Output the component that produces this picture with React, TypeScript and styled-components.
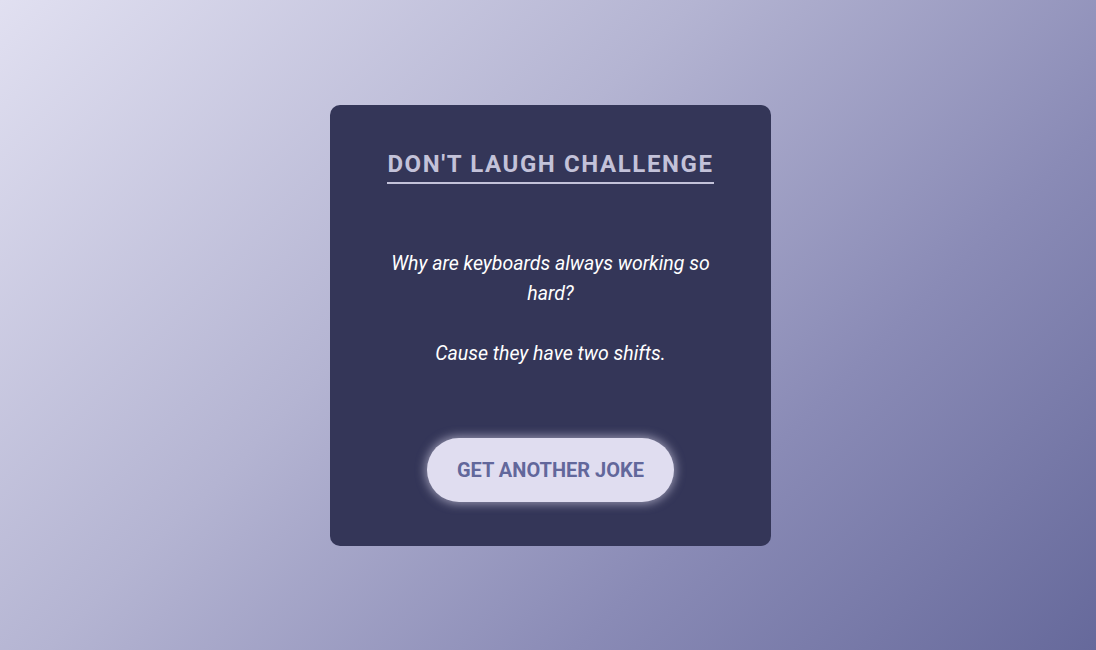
import React from "react";
import styled, { createGlobalStyle } from "styled-components";

const Global = createGlobalStyle`
  html, body { margin: 0; padding: 0; }
  body { font-family: Roboto, "Liberation Sans", sans-serif; }
`;

const Page = styled.div`
  width: 100vw;
  height: 100vh;
  display: flex;
  align-items: center;
  justify-content: center;
  background: linear-gradient(135deg, #e1e0f1 0%, #b4b4d2 40%, #8a8bb6 70%, #66699b 100%);
  overflow: hidden;
`;

const Card = styled.div`
  width: 441px;
  box-sizing: border-box;
  margin-left: 5px;
  padding: 45px 40px 44px;
  background: #343658;
  border-radius: 10px;
  display: flex;
  flex-direction: column;
  align-items: center;
`;

const Title = styled.h1`
  margin: 0;
  font-family: Roboto, "Liberation Sans", sans-serif;
  font-weight: 700;
  font-size: 24px;
  line-height: 28px;
  letter-spacing: 1.6px;
  color: #c3c2d9;
  padding: 0 0 4px 0;
  border-bottom: 2px solid #c3c2d9;
  text-transform: uppercase;
`;

const Joke = styled.p`
  margin: 65px 0 69px;
  width: 341px;
  font-family: Roboto, "Liberation Sans", sans-serif;
  font-style: italic;
  font-size: 19.5px;
  line-height: 30px;
  color: #ffffff;
  text-align: center;
`;

const Button = styled.button`
  width: 247px;
  height: 64px;
  border: none;
  border-radius: 32px;
  background: #e0ddf0;
  color: #62679b;
  font-family: Roboto, "Liberation Sans", sans-serif;
  font-weight: 700;
  font-size: 20px;
  text-transform: uppercase;
  box-shadow: 0 0 10px 2px rgba(224, 221, 240, 0.55);
  cursor: pointer;
`;

export default function App() {
  return (
    <>
      <Global />
      <Page>
        <Card>
          <Title>Don't Laugh Challenge</Title>
          <Joke>
            Why are keyboards always working so hard?
            <br />
            <br />
            Cause they have two shifts.
          </Joke>
          <Button>Get Another Joke</Button>
        </Card>
      </Page>
    </>
  );
}
